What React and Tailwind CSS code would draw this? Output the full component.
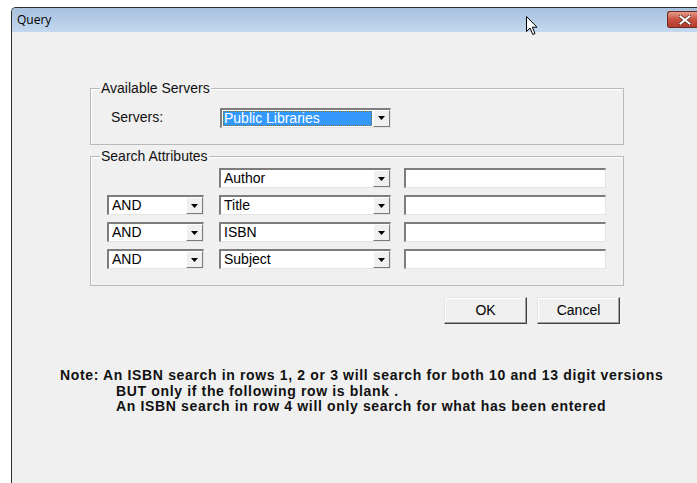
import React from 'react';

const font = { fontFamily: '"Liberation Sans", Arial, sans-serif' };

const Arrow = () => (
  <div className="flex w-[17px] items-center justify-center border-t border-l border-t-white border-l-white border-b border-r border-b-[#7a7a7a] border-r-[#7a7a7a] bg-[#f0f0f0]">
    <svg width="7" height="4" viewBox="0 0 7 4">
      <polygon points="0,0 7,0 3.5,4" fill="#000" />
    </svg>
  </div>
);

const Combo = ({ value, width, selected = false }) => (
  <div className={`flex h-[20px] ${width} border-t-2 border-l-2 border-t-[#7d7d7d] border-l-[#7d7d7d] border-b border-r border-b-[#e3e3e3] border-r-[#e3e3e3] bg-white`}>
    <div className="flex flex-1 items-center p-[1px]">
      {selected ? (
        <div className="flex h-full w-full items-center bg-[#3399ff] px-[1px] text-white outline-1 outline-dotted outline-[#8a6a2a] -outline-offset-1">
          {value}
        </div>
      ) : (
        <span className="px-[2px] text-black">{value}</span>
      )}
    </div>
    <Arrow />
  </div>
);

const TextBox = () => (
  <div className="h-[20px] w-[202px] border-t-2 border-l-2 border-t-[#7d7d7d] border-l-[#7d7d7d] border-b border-r border-b-[#e3e3e3] border-r-[#e3e3e3] bg-white" />
);

const GroupBox = ({ title, className, children }) => (
  <div className={`relative border border-[#b9b9b9] shadow-[inset_1px_1px_0_#ffffff] ${className}`}>
    <span className="absolute left-[9px] top-[-9px] bg-[#f0f0f0] px-[1px] leading-[16px]">{title}</span>
    {children}
  </div>
);

const Button = ({ label }) => (
  <button className="flex h-[27px] w-[83px] items-center justify-center border border-t-[#e6e6e6] border-l-[#e6e6e6] border-b-[#404040] border-r-[#404040] bg-[#f0f0f0] text-[14px] text-black shadow-[inset_-1px_-1px_0_#a0a0a0,inset_1px_1px_0_#ffffff]">
    {label}
  </button>
);

const rows = [
  { op: null, field: 'Author' },
  { op: 'AND', field: 'Title' },
  { op: 'AND', field: 'ISBN' },
  { op: 'AND', field: 'Subject' },
];

const Cursor = () => (
  <svg className="absolute left-[526px] top-[16px]" width="13" height="20" viewBox="0 0 13 20">
    <path d="M0.5 0.5 L0.5 15.5 L4 12 L6.8 18.5 L9 17.5 L6.3 11.2 L11 11.2 Z" fill="#fff" stroke="#000" strokeWidth="1" strokeLinejoin="miter" />
  </svg>
);

export default function App() {
  return (
    <div className="relative h-[483px] w-[697px] overflow-hidden bg-white pl-[11px] pt-[7px] text-[14px] text-[#111]" style={font}>
      <div className="flex h-[476px] w-[686px] flex-col rounded-tl-[5px] border-l border-t border-[#2e2e2e] bg-[#f0f0f0]">
        {/* title bar */}
        <div className="flex h-[24px] items-start rounded-tl-[4px] bg-gradient-to-b from-[#a6c0de] to-[#c3d8ee]">
          <span className="pl-[5px] pt-[4px] text-[12px] leading-[16px] text-black" style={{ fontFamily: '"Open Sans", "Noto Sans", sans-serif' }}>
            Query
          </span>
          <div className="ml-auto mt-[3px] flex h-[17px] w-[30px] items-center justify-center rounded-l-[3px] border border-r-0 border-[#6b2a22] bg-gradient-to-b from-[#e39a8a] via-[#c7503e] to-[#b53c2b] pl-[4px]">
            <svg width="12" height="10" viewBox="0 0 12 10">
              <path d="M1.5 1.5 L10.5 8.5 M10.5 1.5 L1.5 8.5" stroke="#4a1a14" strokeWidth="3.4" strokeLinecap="square" />
              <path d="M1.5 1.5 L10.5 8.5 M10.5 1.5 L1.5 8.5" stroke="#ffffff" strokeWidth="2" strokeLinecap="square" />
            </svg>
          </div>
        </div>

        {/* dialog body */}
        <div className="flex flex-col pl-[78px]">
          <GroupBox title="Available Servers" className="mt-[56px] h-[57px] w-[534px]">
            <div className="flex items-center pl-[20px] pt-[18px]">
              <span className="w-[109px]">Servers:</span>
              <Combo value="Public Libraries" width="w-[171px]" selected />
            </div>
          </GroupBox>

          <GroupBox title="Search Attributes" className="mt-[11px] h-[130px] w-[534px]">
            <div className="flex flex-col gap-[7px] pl-[16px] pt-[11px]">
              {rows.map((row, i) => (
                <div key={i} className="flex items-center">
                  <div className="w-[112px]">
                    {row.op && <Combo value={row.op} width="w-[97px]" />}
                  </div>
                  <Combo value={row.field} width="w-[172px]" />
                  <div className="ml-[13px]">
                    <TextBox />
                  </div>
                </div>
              ))}
            </div>
          </GroupBox>

          <div className="mt-[11px] flex w-[534px] justify-end gap-[10px] pr-[4px]">
            <Button label="OK" />
            <Button label="Cancel" />
          </div>
        </div>

        <div className="ml-[48px] mt-[44px] flex flex-col text-[14px] font-bold leading-[15.5px] tracking-[0.65px] text-[#111]">
          <span>Note: An ISBN search in rows 1, 2 or 3 will search for both 10 and 13 digit versions</span>
          <span className="pl-[56px]">BUT only if the following row is blank .</span>
          <span className="pl-[56px]">An ISBN search in row 4 will only search for what has been entered</span>
        </div>
      </div>
      <Cursor />
    </div>
  );
}
